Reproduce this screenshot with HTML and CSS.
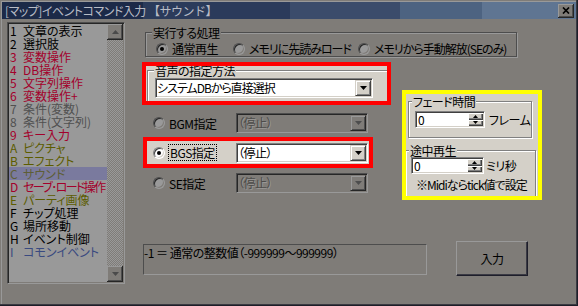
FILE: index.html
```html
<!DOCTYPE html>
<html lang="ja">
<head>
<meta charset="utf-8">
<title>イベントコマンド入力</title>
<link rel="stylesheet" href="styles.css">
</head>
<body>
<div class="window">
  <div class="titlebar">
    <span class="title">[マップ]イベントコマンド入力 <span class="nopalt">【サウンド】</span></span>
    <span class="close"><svg width="8" height="7" viewBox="0 0 8 7"><path d="M1 0.5 L7 6.5 M7 0.5 L1 6.5" stroke="#000" stroke-width="1.7" fill="none"/></svg></span>
  </div>
  <div class="body">
    <div class="listbox">
      <ul class="items">
        <li class="c-black"><span class="k">1</span>文章の表示</li>
        <li class="c-black"><span class="k">2</span>選択肢</li>
        <li class="c-red"><span class="k">3</span>変数操作</li>
        <li class="c-red"><span class="k">4</span>DB操作</li>
        <li class="c-red"><span class="k">5</span>文字列操作</li>
        <li class="c-red"><span class="k">6</span>変数操作+</li>
        <li class="c-gray"><span class="k">7</span>条件(変数)</li>
        <li class="c-gray"><span class="k">8</span>条件(文字列)</li>
        <li class="c-red"><span class="k">9</span>キー入力</li>
        <li class="c-olive"><span class="k">A</span>ピクチャ</li>
        <li class="c-olive"><span class="k">B</span>エフェクト</li>
        <li class="c-olive sel"><span class="k">C</span>サウンド</li>
        <li class="c-red tight"><span class="k">D</span>セーブ･ロード操作</li>
        <li class="c-olive"><span class="k">E</span>パーティ画像</li>
        <li class="c-black"><span class="k">F</span>チップ処理</li>
        <li class="c-black"><span class="k">G</span>場所移動</li>
        <li class="c-black"><span class="k">H</span>イベント制御</li>
        <li class="c-blue"><span class="k">I</span>コモンイベント</li>
      </ul>
      <div class="vscroll">
        <div class="sbtn"><svg width="7" height="4" viewBox="0 0 7 4"><path d="M0 4h7L3.5 0z"/></svg></div>
        <div class="track"></div>
        <div class="sbtn"><svg width="7" height="4" viewBox="0 0 7 4"><path d="M0 0h7L3.5 4z"/></svg></div>
      </div>
    </div>

    <div class="main">
      <fieldset class="group dim g-exec">
        <legend>実行する処理</legend>
        <div class="exec-row">
          <label class="radio"><span class="rb dim checked"></span>通常再生</label>
          <label class="radio kana"><span class="rb dim"></span>メモリに先読みロード</label>
          <label class="radio kana"><span class="rb dim"></span>メモリから手動解放(SEのみ)</label>
        </div>
      </fieldset>

      <div class="mid">
        <div class="left-col">
          <div class="hl-red hl-1">
            <fieldset class="group lite g-method">
              <legend>音声の指定方法</legend>
              <div class="combo w-method">
                <span class="val kana">システムDBから直接選択</span>
                <span class="dd"><svg width="7" height="4" viewBox="0 0 7 4"><path d="M0 0h7L3.5 4z"/></svg></span>
              </div>
            </fieldset>
          </div>

          <div class="srow srow-bgm">
            <label class="radio"><span class="rb dim"></span>BGM指定</label>
            <div class="combo off">
              <span class="val">（停止）</span>
              <span class="dd"><svg width="7" height="4" viewBox="0 0 7 4"><path d="M0 0h7L3.5 4z"/></svg></span>
            </div>
          </div>

          <div class="hl-red hl-2">
            <label class="radio"><span class="rb checked"></span><span class="focus">BGS指定</span></label>
            <div class="combo">
              <span class="val">（停止）</span>
              <span class="dd"><svg width="7" height="4" viewBox="0 0 7 4"><path d="M0 0h7L3.5 4z"/></svg></span>
            </div>
          </div>

          <div class="srow srow-se">
            <label class="radio"><span class="rb dim"></span>SE指定</label>
            <div class="combo off">
              <span class="val">（停止）</span>
              <span class="dd"><svg width="7" height="4" viewBox="0 0 7 4"><path d="M0 0h7L3.5 4z"/></svg></span>
            </div>
          </div>
        </div>

        <div class="hl-yel">
          <fieldset class="group lite g-fade">
            <legend>フェード時間</legend>
            <div class="spin-row fade-row">
              <div class="spin w-fade">
                <span class="v">0</span>
                <span class="ud">
                  <span><svg width="5" height="3" viewBox="0 0 5 3"><path d="M0 3h5L2.5 0z"/></svg></span>
                  <span><svg width="5" height="3" viewBox="0 0 5 3"><path d="M0 0h5L2.5 3z"/></svg></span>
                </span>
              </div>
              <span>フレーム</span>
            </div>
          </fieldset>
          <fieldset class="group lite g-mid">
            <legend>途中再生</legend>
            <div class="spin-row mid-row">
              <div class="spin w-mid">
                <span class="v">0</span>
                <span class="ud">
                  <span><svg width="5" height="3" viewBox="0 0 5 3"><path d="M0 3h5L2.5 0z"/></svg></span>
                  <span><svg width="5" height="3" viewBox="0 0 5 3"><path d="M0 0h5L2.5 3z"/></svg></span>
                </span>
              </div>
              <span>ミリ秒</span>
            </div>
            <div class="note kana">※Midiならtick値で設定</div>
          </fieldset>
        </div>
      </div>

      <div class="bottom">
        <div class="info">-1 ＝ 通常の整数値（-999999～999999）</div>
        <button class="btn">入力</button>
      </div>
    </div>
  </div>
</div>
</body>
</html>
```
FILE: styles.css
```css
* { box-sizing: border-box; }
html, body { margin: 0; padding: 0; }
body {
  width: 578px; height: 306px; overflow: hidden;
  background: #7f7c78;
  font-family: "Noto Sans CJK JP", "Noto Sans", sans-serif;
  font-size: 12px; line-height: 13px; color: #000;
  font-feature-settings: "palt";
  letter-spacing: -0.5px;
}
.kana { letter-spacing: -1px; }
.nopalt { font-feature-settings: normal; }
.window {
  width: 578px; height: 306px; padding: 2px;
  background: #7f7c78;
  box-shadow: inset -1px -1px 0 #1e1e28, inset -2px -2px 0 #3a3a42, inset 1px 1px 0 #7f7c78, inset 2px 2px 0 #999;
}
/* title bar */
.titlebar {
  height: 17px; display: flex; align-items: center; justify-content: space-between;
  padding: 0 2px 0 3px; white-space: nowrap; color: #b8bcc6;
  background: linear-gradient(to right, #1c2a48 0 141px, #2b3b5b 141px 288px, #3b4c6b 288px 398px, #4d6381 398px 480px, #5f7592 480px);
}
.close {
  width: 16px; height: 14px; display: flex; align-items: center; justify-content: center;
  background: #7f7c78;
  box-shadow: inset -1px -1px 0 #262626, inset 1px 1px 0 #999, inset -2px -2px 0 #4d4d4d;
}
.body { display: flex; align-items: flex-start; }

/* list */
.listbox {
  margin: 3px 0 0 5px; width: 118px; height: 262px; display: flex;
  border: 1px solid; border-color: #4d4d4d #999 #999 #4d4d4d;
  box-shadow: inset 1px 1px 0 #262626, inset -1px -1px 0 #7f7c78;
  padding: 1px; background: #999;
}
.items { list-style: none; margin: 0; padding: 0; width: 98px; letter-spacing: 0; }
.items li { height: 13px; padding-left: 1px; white-space: nowrap; }
.items li.tight { letter-spacing: -1.6px; }
.items .k { display: inline-block; width: 13px; letter-spacing: 0; }
.c-black { color: #000; }
.c-red { color: #a3002b; }
.c-gray { color: #505050; }
.c-olive { color: #5c5c00; }
.c-blue { color: #3a4a80; }
.items li.sel { background: #7a7a9e; color: #5e5e36; }
.vscroll { width: 16px; display: flex; flex-direction: column; }
.sbtn {
  width: 16px; height: 16px; display: flex; align-items: center; justify-content: center;
  background: #7f7c78; fill: #4a4a4a;
  box-shadow: inset -1px -1px 0 #262626, inset 1px 1px 0 #999, inset -2px -2px 0 #4d4d4d;
}
.track { flex: 1; background: repeating-conic-gradient(#999 0 25%, #7f7c78 0 50%) 0 0 / 2px 2px; }

/* main */
.main { margin-left: 17px; width: 434px; }
.group { margin: 0; padding: 0; min-width: 0; border: 1px solid; }
.group > legend { padding: 0 1px; margin-left: 6px; line-height: 13px; }
.group.dim { border-color: #4d4d4d; box-shadow: inset 1px 1px 0 #999, 1px 1px 0 #999; }
.group.dim > legend { background: #7f7c78; }
.group.lite { border-color: #808080; box-shadow: inset 1px 1px 0 #fff, 1px 1px 0 #fff; }
.group.lite > legend { background: #d4d0c8; }

.g-exec { margin: 7px 0 0 3px; width: 372px; }
.exec-row { display: grid; grid-template-columns: 77px 125px auto; padding: 3px 0 1px 10px; }
.radio { display: flex; align-items: center; gap: 4px; white-space: nowrap; }

.rb {
  width: 12px; height: 12px; border-radius: 50%; flex: none; position: relative;
  border: 1px solid; border-color: #808080 #fff #fff #808080;
  box-shadow: inset 1px 1px 0 #404040, inset -1px -1px 0 #d4d0c8;
  background: #fff;
}
.rb.dim {
  border-color: #4d4d4d #999 #999 #4d4d4d;
  box-shadow: inset 1px 1px 0 #262626, inset -1px -1px 0 #7f7c78;
  background: #999;
}
.rb.checked::after {
  content: ""; position: absolute; left: 3px; top: 3px; width: 4px; height: 4px;
  border-radius: 50%; background: #000;
}

.mid { display: flex; gap: 11px; margin-top: 5px; align-items: flex-start; }
.left-col { width: 249px; }
.hl-red { border: 4px solid #ff0000; background: #d4d0c8; overflow: hidden; }
.hl-1 { height: 43px; }
.g-method { margin: -2px 0 0 1px; width: 260px; height: 60px; }
.g-method .combo { margin: 1px 0 0 7px; }

.combo {
  display: flex; height: 20px; width: 132px; padding: 1px;
  border: 1px solid; border-color: #808080 #fff #fff #808080;
  box-shadow: inset 1px 1px 0 #404040, inset -1px -1px 0 #d4d0c8;
  background: #fff;
}
.combo.w-method { width: 218px; }
.combo .val { flex: 1; line-height: 16px; white-space: nowrap; }
.combo .dd {
  width: 16px; height: 16px; display: flex; align-items: center; justify-content: center;
  background: #d4d0c8; fill: #000;
  border: 1px solid; border-color: #d4d0c8 #404040 #404040 #d4d0c8;
  box-shadow: inset 1px 1px 0 #fff, inset -1px -1px 0 #808080;
}
.combo.off {
  border-color: #4d4d4d #999 #999 #4d4d4d;
  box-shadow: inset 1px 1px 0 #262626, inset -1px -1px 0 #7f7c78;
  background: #7f7c78;
}
.combo.off .val { color: #4d4c4a; text-shadow: 1px 1px 0 #999795; }
.combo.off .dd {
  background: #7f7c78; fill: #4d4d4d;
  border-color: #7f7c78 #262626 #262626 #7f7c78;
  box-shadow: inset 1px 1px 0 #999, inset -1px -1px 0 #4d4d4d;
}

.srow { display: grid; grid-template-columns: 83px 132px; align-items: center; padding-left: 11px; height: 20px; }
.srow-bgm { margin-top: 8px; }
.srow-se { margin-top: 5px; }
.hl-2 {
  margin: 4px 0 0 1px; width: 230px; height: 31px;
  display: grid; grid-template-columns: 83px 132px; align-items: center; padding-left: 6px;
}
.focus { outline: 1px dotted #000; padding: 1px; line-height: 13px; }

/* yellow */
.hl-yel {
  margin-top: 28px; width: 140px; height: 110px;
  border: 4px solid #ffff00; background: #d4d0c8; overflow: hidden;
}
.hl-yel .group > legend { margin-left: 3px; }
.g-fade { margin: 1px 0 0 2px; width: 124px; padding-bottom: 9px; }
.g-mid { margin: 6px 0 0 -1px; width: 131px; height: 70px; }
.spin-row { display: flex; align-items: center; white-space: nowrap; }
.fade-row { margin-top: 3px; padding-left: 6px; gap: 4px; }
.mid-row { margin-top: 0; padding-left: 5px; gap: 2px; }
.spin {
  display: flex; height: 17px; padding: 1px;
  border: 1px solid; border-color: #808080 #fff #fff #808080;
  box-shadow: inset 1px 1px 0 #404040, inset -1px -1px 0 #d4d0c8;
  background: #fff;
}
.w-fade { width: 70px; }
.w-mid { width: 73px; }
.spin .v { flex: 1; line-height: 13px; padding-left: 1px; }
.spin .ud { width: 15px; display: flex; flex-direction: column; }
.spin .ud span {
  flex: 1; display: flex; align-items: center; justify-content: center;
  background: #d4d0c8; fill: #000;
  box-shadow: inset 1px 1px 0 #fff, inset -1px -1px 0 #404040, inset -2px -2px 0 #808080;
}
.note { margin-top: 4px; padding-left: 10px; white-space: nowrap; }

/* bottom */
.bottom { display: flex; align-items: flex-start; margin-top: 41px; }
.info {
  margin: 3px 0 0 1px; width: 284px; height: 31px; padding-top: 1px;
  border: 1px solid; border-color: #4d4d4d #999 #999 #4d4d4d;
  white-space: nowrap;
}
.btn {
  margin-left: 29px; width: 72px; height: 35px; padding: 0;
  font: inherit; letter-spacing: inherit; color: #000; background: #7f7c78;
  border: 1px solid; border-color: #999 #1e1e2a #1e1e2a #999;
  box-shadow: inset -1px -1px 0 #3a3a44;
}
```
